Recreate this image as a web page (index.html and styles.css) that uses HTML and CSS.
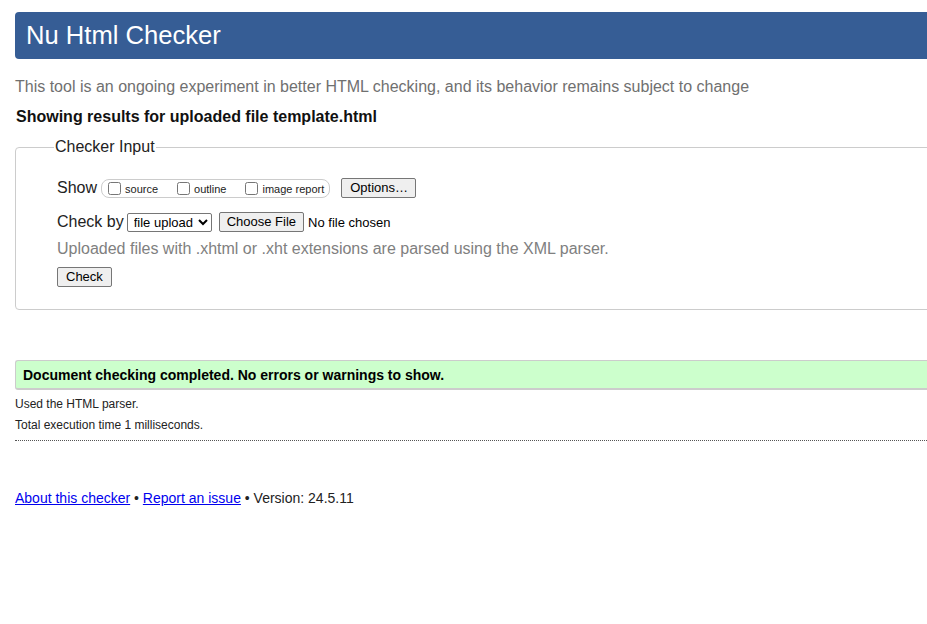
FILE: index.html
```html
<!DOCTYPE html>
<html lang="en">
<head>
<meta charset="utf-8">
<title>Showing results for template.html - Nu Html Checker</title>
<link rel="stylesheet" href="styles.css">
</head>
<body>
<div class="page">
  <h1 class="banner">Nu Html Checker</h1>
  <p class="intro">This tool is an ongoing experiment in better HTML checking, and its behavior remains subject to change</p>
  <p class="results-for">Showing results for uploaded file template.html</p>
  <fieldset class="input-box">
    <legend class="input-legend">Checker Input</legend>
    <div class="input-body">
      <div class="row show-row">
        <span class="row-label">Show</span>
        <span class="show-pill">
          <label class="opt"><input type="checkbox" class="cb">source</label>
          <label class="opt"><input type="checkbox" class="cb">outline</label>
          <label class="opt"><input type="checkbox" class="cb">image report</label>
        </span>
        <button class="btn options-btn" type="button">Options…</button>
      </div>
      <div class="row check-row">
        <span class="row-label">Check by</span>
        <select class="sel"><option>file upload</option></select>
        <span class="file-wrap"><button class="btn file-btn" type="button">Choose File</button><span class="no-file">No file chosen</span></span>
      </div>
      <p class="note">Uploaded files with .xhtml or .xht extensions are parsed using the XML parser.</p>
      <div class="row"><button class="btn check-btn" type="button">Check</button></div>
    </div>
  </fieldset>
  <p class="success">Document checking completed. No errors or warnings to show.</p>
  <p class="meta">Used the HTML parser.</p>
  <p class="meta">Total execution time 1 milliseconds.</p>
  <hr class="dots">
  <p class="footer"><a href="#" class="flink">About this checker</a> • <a href="#" class="flink">Report an issue</a> • Version: 24.5.11</p>
</div>
</body>
</html>
```

FILE: styles.css
```css
html, body {
  margin: 0;
  padding: 0;
  overflow: hidden;
  background: #fff;
}
body {
  font-family: "Liberation Sans", Arial, sans-serif;
  color: #222;
}
.page {
  width: 1000px;
  padding: 12px 0 0 15px;
}
.banner {
  margin: 0;
  height: 47px;
  line-height: 47px;
  background: #365d95;
  color: #fff;
  font-size: 25.6px;
  font-weight: normal;
  padding-left: 11px;
  border-radius: 4px 0 0 4px;
}
.intro {
  margin: 18px 0 0 0;
  font-size: 16px;
  color: #707070;
  line-height: 20px;
}
.results-for {
  margin: 10px 0 0 1px;
  font-size: 16px;
  font-weight: bold;
  color: #111;
  line-height: 20px;
}
.input-box {
  margin: 11px 0 0 0;
  border: 1px solid #ccc;
  border-radius: 4px 0 0 4px;
  padding: 0;
  min-width: 0;
}
.input-legend {
  font-size: 16px;
  color: #222;
  padding: 0 1px;
  margin-left: 38px;
}
.input-body {
  padding: 21px 0 22px 41px;
}
.row {
  display: flex;
  align-items: center;
  height: 20px;
}
.row-label {
  font-size: 16px;
  color: #222;
}
.show-row {
  margin-top: 1px;
}
.show-pill {
  display: inline-flex;
  align-items: center;
  height: 17px;
  border: 1px solid #ccc;
  border-radius: 8px;
  margin-left: 4px;
  padding: 0 5px 0 0;
  gap: 19px;
}
.opt {
  display: inline-flex;
  align-items: center;
  font-size: 11px;
  color: #222;
  padding-top: 2px;
}
.cb {
  width: 13px;
  height: 13px;
  margin: 0 4px 2px 6px;
}
.opt + .opt .cb { margin-left: 0; }
.btn {
  font-family: "Liberation Sans", Arial, sans-serif;
  font-size: 13px;
  color: #000;
  background: #efefef;
  border: 1px solid #767676;
  border-radius: 2px;
  height: 20px;
  padding: 0 7px;
  line-height: 18px;
}
.options-btn {
  margin-left: 11px;
  padding: 0 7px 0 8px;
}
.check-row {
  margin-top: 14px;
}
.sel {
  font-family: "Liberation Sans", Arial, sans-serif;
  font-size: 13px;
  color: #000;
  height: 19px;
  width: 85px;
  margin-left: 3px;
  border: 1px solid #767676;
  border-radius: 2px;
  background: #fff;
  padding: 0 0 0 2px;
}
.file-wrap {
  display: inline-flex;
  align-items: center;
  margin-left: 7px;
  font-size: 13px;
  color: #000;
}
.file-btn {
  margin-right: 4px;
}
.note {
  margin: 7px 0 8px 0;
  font-size: 16px;
  color: #808080;
  line-height: 20px;
}
.check-btn {
  padding: 0 8px;
}
.success {
  margin: 50px 0 0 0;
  background: #ccffcc;
  border: 1px solid #ccc;
  border-width: 1px 0 2px 1px;
  border-radius: 3px 0 0 3px;
  height: 27px;
  line-height: 28px;
  padding-left: 7px;
  font-size: 14px;
  font-weight: bold;
  color: #000;
}
.meta {
  margin: 7px 0 0 0;
  font-size: 12px;
  line-height: 14px;
  color: #222;
}
.meta + .meta {
  margin-top: 7px;
}
.dots {
  margin: 8px 0 0 0;
  border: 0;
  border-top: 1px dotted #555;
  height: 0;
}
.footer {
  margin: 49px 0 0 0;
  font-size: 14px;
  line-height: 16px;
  color: #222;
}
.flink {
  color: #00e;
  text-decoration: underline;
}
```
